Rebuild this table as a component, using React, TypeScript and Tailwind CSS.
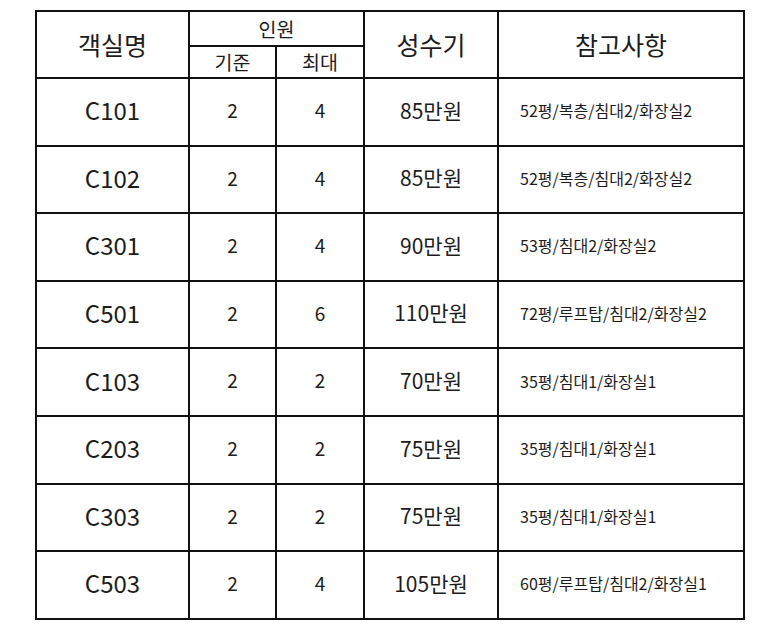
import React from 'react';

type Room = {
  name: string;
  base: number;
  max: number;
  price: string;
  note: string;
};

const rooms: Room[] = [
  { name: 'C101', base: 2, max: 4, price: '85만원', note: '52평/복층/침대2/화장실2' },
  { name: 'C102', base: 2, max: 4, price: '85만원', note: '52평/복층/침대2/화장실2' },
  { name: 'C301', base: 2, max: 4, price: '90만원', note: '53평/침대2/화장실2' },
  { name: 'C501', base: 2, max: 6, price: '110만원', note: '72평/루프탑/침대2/화장실2' },
  { name: 'C103', base: 2, max: 2, price: '70만원', note: '35평/침대1/화장실1' },
  { name: 'C203', base: 2, max: 2, price: '75만원', note: '35평/침대1/화장실1' },
  { name: 'C303', base: 2, max: 2, price: '75만원', note: '35평/침대1/화장실1' },
  { name: 'C503', base: 2, max: 4, price: '105만원', note: '60평/루프탑/침대2/화장실1' },
];

const cell = 'border-2 border-[#111] p-0 text-center align-middle';

const App: React.FC = () => {
  return (
    <div
      className="min-h-screen w-[773px] bg-white pl-[35px] pt-[10px] text-[#1c1c1c]"
      style={{ fontFamily: '"Noto Sans CJK KR", "Noto Sans", sans-serif' }}
    >
      <table className="table-fixed border-collapse">
        <colgroup>
          <col className="w-[153px]" />
          <col className="w-[87px]" />
          <col className="w-[88px]" />
          <col className="w-[134px]" />
          <col className="w-[246px]" />
        </colgroup>
        <thead>
          {/* 인원 spans two sub columns */}
          <tr className="h-[35px]">
            <th rowSpan={2} className={`${cell} text-[25px] font-normal`}>객실명</th>
            <th colSpan={2} className={`${cell} text-[19.5px] font-normal leading-none`}>인원</th>
            <th rowSpan={2} className={`${cell} text-[25px] font-normal`}>성수기</th>
            <th rowSpan={2} className={`${cell} text-[25px] font-normal`}>참고사항</th>
          </tr>
          <tr className="h-[32px]">
            <th className={`${cell} text-[19.5px] font-normal leading-none`}>기준</th>
            <th className={`${cell} text-[19.5px] font-normal leading-none`}>최대</th>
          </tr>
        </thead>
        <tbody>
          {rooms.map((r) => (
            <tr key={r.name} className="h-[67.6px]">
              <td className={`${cell} pb-[3px] text-[24px]`}>{r.name}</td>
              <td className={`${cell} pb-[3px] text-[19px]`}>{r.base}</td>
              <td className={`${cell} pb-[3px] text-[19px]`}>{r.max}</td>
              <td className={`${cell} pb-[3px] text-[21px]`}>{r.price}</td>
              <td className={`${cell} pb-[3px] pl-[21px] text-left text-[16px]`}>{r.note}</td>
            </tr>
          ))}
        </tbody>
      </table>
    </div>
  );
};

export default App;
